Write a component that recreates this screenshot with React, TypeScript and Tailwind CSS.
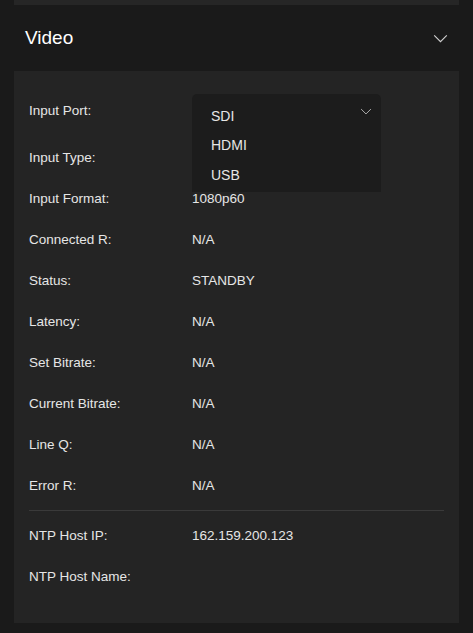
const rows = [
  ['Input Format:', '1080p60'],
  ['Connected R:', 'N/A'],
  ['Status:', 'STANDBY'],
  ['Latency:', 'N/A'],
  ['Set Bitrate:', 'N/A'],
  ['Current Bitrate:', 'N/A'],
  ['Line Q:', 'N/A'],
  ['Error R:', 'N/A'],
]

function Row({ label, value, className = '' }: { label: string; value?: string; className?: string }) {
  return (
    <div className={`flex h-[41px] items-center ${className}`}>
      <span className="w-[163px]">{label}</span>
      <span>{value}</span>
    </div>
  )
}

function Chevron({ className }: { className: string }) {
  return (
    <svg viewBox="0 0 16 10" fill="none" stroke="currentColor" strokeWidth="1.3" className={className}>
      <path d="M1 1.5l7 7 7-7" />
    </svg>
  )
}

export default function App() {
  return (
    <div
      className="min-h-[633px] bg-[#1a1a1a] px-[14px] text-[13.5px] text-[#e6e6e6]"
      style={{ fontFamily: '"Liberation Sans", Arial, sans-serif' }}
    >
      <div className="h-[5px] bg-[#262626]" />
      <div className="flex h-[66px] items-center justify-between pl-[11px] pr-[11px]">
        <h2 className="text-[19px] text-white">Video</h2>
        <Chevron className="h-[9px] w-[15px] text-[#d0d0d0]" />
      </div>
      <div className="relative bg-[#242424] px-[15px] pb-[25px] pt-[20px]">
        <Row label="Input Port:" />
        <Row label="Input Type:" className="mt-[6px]" />
        {rows.map(([l, v]) => (
          <Row key={l} label={l} value={v} />
        ))}
        <div className="mt-[3px] h-px bg-[#3a3a3a]" />
        <Row label="NTP Host IP:" value="162.159.200.123" className="mt-[5px]" />
        <Row label="NTP Host Name:" />

        <div className="absolute left-[178px] top-[23px] w-[189px]">
          <div className="flex h-[36px] items-center justify-between rounded-t-[5px] bg-[#1c1c1c] pl-[19px] pr-[9px] pt-[8px]">
            <span className="text-[14px]">SDI</span>
            <Chevron className="mb-[9px] h-[7px] w-[12px] text-[#bbbbbb]" />
          </div>
          <div className="bg-[#1c1c1c] pb-[2px]">
            <div className="flex h-[30px] items-center pl-[19px] text-[14px]">HDMI</div>
            <div className="flex h-[30px] items-center pl-[19px] text-[14px]">USB</div>
          </div>
        </div>
      </div>
    </div>
  )
}
